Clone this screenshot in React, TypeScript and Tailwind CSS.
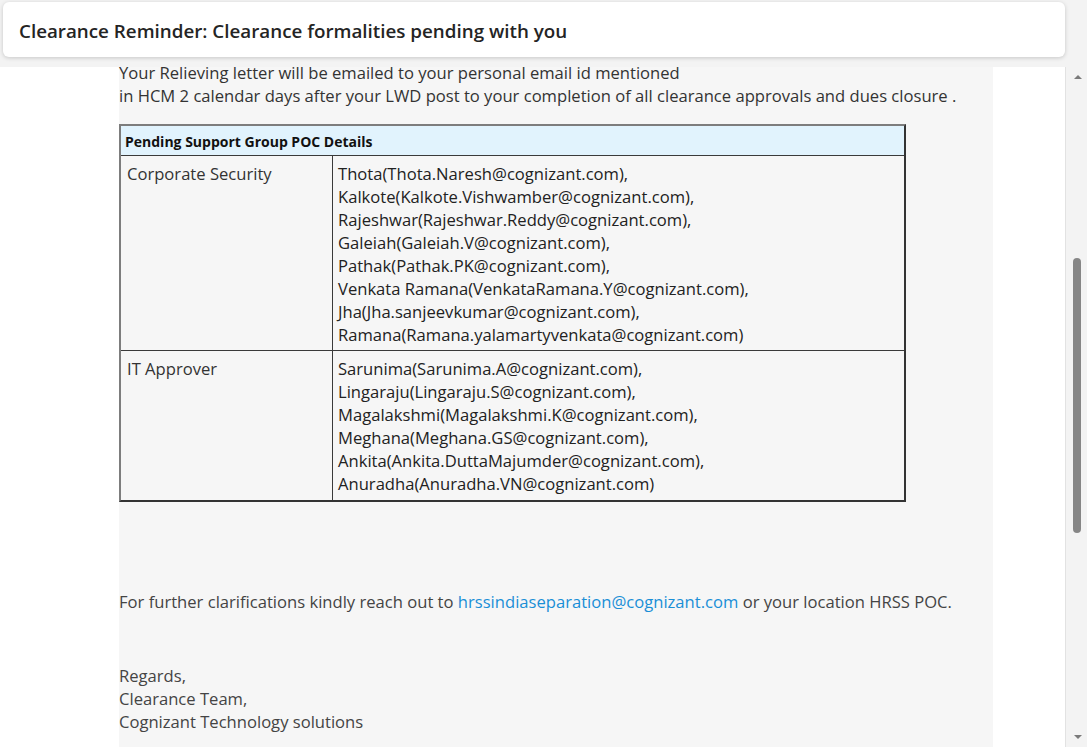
import React from "react";

const font = { fontFamily: '"Open Sans", "Noto Sans", Arial, sans-serif' };

const security = [
  "Thota(Thota.Naresh@cognizant.com),",
  "Kalkote(Kalkote.Vishwamber@cognizant.com),",
  "Rajeshwar(Rajeshwar.Reddy@cognizant.com),",
  "Galeiah(Galeiah.V@cognizant.com),",
  "Pathak(Pathak.PK@cognizant.com),",
  "Venkata Ramana(VenkataRamana.Y@cognizant.com),",
  "Jha(Jha.sanjeevkumar@cognizant.com),",
  "Ramana(Ramana.yalamartyvenkata@cognizant.com)",
];
const it = [
  "Sarunima(Sarunima.A@cognizant.com),",
  "Lingaraju(Lingaraju.S@cognizant.com),",
  "Magalakshmi(Magalakshmi.K@cognizant.com),",
  "Meghana(Meghana.GS@cognizant.com),",
  "Ankita(Ankita.DuttaMajumder@cognizant.com),",
  "Anuradha(Anuradha.VN@cognizant.com)",
];

function Row({ label, items, last }: { label: string; items: string[]; last?: boolean }) {
  return (
    <div className="flex border-t border-[#3a3a3a]">
      <div
        className={`w-[212px] shrink-0 border-r border-[#3a3a3a] pl-[6px] pt-[6px] text-[16.6px] leading-[23px] text-[#333] ${
          last ? "pb-[5px]" : "pb-[4px]"
        }`}
      >
        {label}
      </div>
      <div
        className={`pl-[5px] pt-[6px] text-[16.6px] leading-[23px] text-[#222] ${last ? "pb-[5px]" : "pb-[4px]"}`}
      >
        {items.map((t) => (
          <div key={t} className="whitespace-nowrap">
            {t}
          </div>
        ))}
      </div>
    </div>
  );
}

export default function App() {
  return (
    <div className="relative flex h-[747px] w-full flex-col overflow-hidden bg-[#f3f3f3]" style={font}>
      <div className="flex">
        <div className="flex-1 pl-[3px] pt-[2px]">
          <div className="flex h-[55px] items-center rounded-[6px] bg-white pl-[16px] pt-[3px] shadow-[0_1px_4px_rgba(0,0,0,0.18)]">
            <span className="text-[18.8px] font-semibold text-[#242424]">
              Clearance Reminder: Clearance formalities pending with you
            </span>
          </div>
        </div>
        <div className="w-[22px] shrink-0" />
      </div>

      <div className="mt-[10px] flex min-h-0 flex-1">
        <div className="min-h-0 flex-1 overflow-hidden bg-white">
          <div className="ml-[119px] h-[720px] w-[874px] bg-[#f6f6f6]">
            <div className="-mt-[6px] text-[16.6px] leading-[23px] text-[#333]">
              <div className="whitespace-nowrap">
                Your Relieving letter will be emailed to your personal email id mentioned
              </div>
              <div className="whitespace-nowrap">
                in HCM 2 calendar days after your LWD post to your completion of all clearance approvals and dues closure .
              </div>
            </div>

            <div className="mt-[17px] w-[787px] border-2 border-t-[#7d7d7d] border-l-[#7d7d7d] border-r-[#333] border-b-[#333]">
              <div className="flex h-[29px] items-center bg-[#e1f3fd] pl-[4px] pt-[2px] text-[14px] font-bold text-[#111]">
                Pending Support Group POC Details
              </div>
              <Row label="Corporate Security" items={security} />
              <Row label="IT Approver" items={it} last />
            </div>

            <div className="mt-[88px] whitespace-nowrap text-[16.6px] leading-[23px] text-[#444]">
              For further clarifications kindly reach out to{" "}
              <span className="text-[#1a8fd6]">hrssindiaseparation@cognizant.com</span> or your location HRSS POC.
            </div>

            <div className="mt-[51px] text-[16.6px] leading-[23px] text-[#444]">
              <div>Regards,</div>
              <div>Clearance Team,</div>
              <div>Cognizant Technology solutions</div>
            </div>
          </div>
        </div>

        <div className="relative w-[22px] shrink-0 border-l border-[#e2e2e2] bg-[#f3f3f3]">
          <div className="absolute left-[8px] top-[8px] h-0 w-0 border-x-[4px] border-b-[4px] border-x-transparent border-b-[#7a7a7a]" />
          <div className="absolute left-[7px] top-[191px] h-[275px] w-[8px] rounded-full bg-[#868686]" />
          <div className="absolute left-[8px] bottom-[8px] h-0 w-0 border-x-[4px] border-t-[4px] border-x-transparent border-t-[#7a7a7a]" />
        </div>
      </div>
    </div>
  );
}
